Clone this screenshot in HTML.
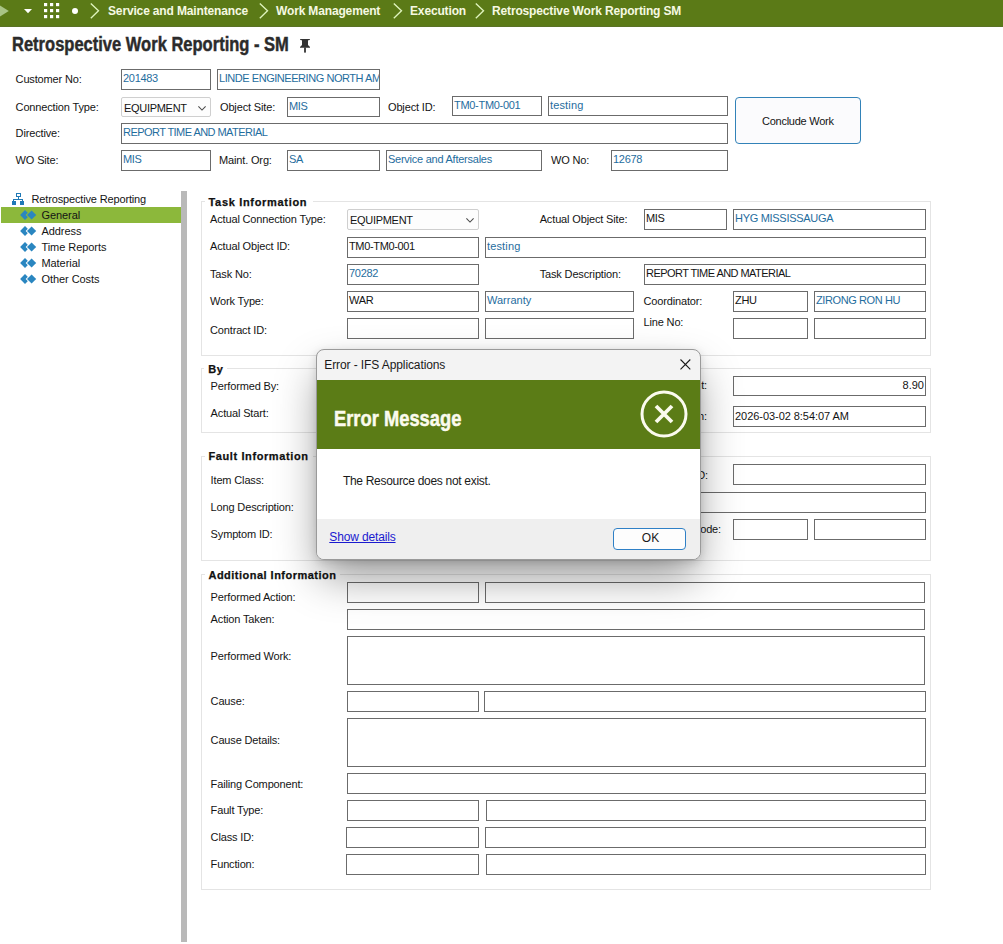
<!DOCTYPE html><html><head><meta charset="utf-8"><style>
html,body{margin:0;padding:0;width:1003px;height:944px;overflow:hidden;background:#fff;position:relative}
body{font-family:"Liberation Sans",sans-serif}
.t{position:absolute;white-space:nowrap;line-height:1.117;font-family:"Liberation Sans",sans-serif}
.f{position:absolute;box-sizing:border-box;border:1px solid #6b6b6b;background:#fff;overflow:hidden}
.sel{position:absolute;box-sizing:border-box;border:1px solid #cfcfcf;border-radius:2px;background:#fdfdfd}
.a{position:absolute}
.g{position:absolute;box-sizing:border-box;border:1px solid #e4e4e4}
.gt{position:absolute;background:#fff}
svg{position:absolute;overflow:visible}
</style></head><body>
<div style="position:absolute;left:0;top:0;width:1003px;height:27px;background:#5b7a17"></div><div style="position:absolute;left:0;top:26px;width:1003px;height:1px;background:#5a7226"></div>
<svg style="left:0;top:0" width="120" height="26"><polygon points="-8,0.6 8.8,11 -8,21.4" fill="#a9c486"/><polygon points="24,9 32,9 28,13.2" fill="#fff"/><rect x="44" y="3" width="3.2" height="3.2" fill="#fff"/><rect x="44" y="9" width="3.2" height="3.2" fill="#fff"/><rect x="44" y="15" width="3.2" height="3.2" fill="#fff"/><rect x="50" y="3" width="3.2" height="3.2" fill="#fff"/><rect x="50" y="9" width="3.2" height="3.2" fill="#fff"/><rect x="50" y="15" width="3.2" height="3.2" fill="#fff"/><rect x="56" y="3" width="3.2" height="3.2" fill="#fff"/><rect x="56" y="9" width="3.2" height="3.2" fill="#fff"/><rect x="56" y="15" width="3.2" height="3.2" fill="#fff"/><circle cx="75" cy="11" r="3" fill="#fff"/></svg>
<svg style="left:90px;top:3px" width="10" height="16"><path d="M0.8 0.5 L8.5 7.8 L0.8 15.2" fill="none" stroke="#dff4bd" stroke-width="1.35"/></svg>
<svg style="left:259px;top:3px" width="10" height="16"><path d="M0.8 0.5 L8.5 7.8 L0.8 15.2" fill="none" stroke="#dff4bd" stroke-width="1.35"/></svg>
<svg style="left:393px;top:3px" width="10" height="16"><path d="M0.8 0.5 L8.5 7.8 L0.8 15.2" fill="none" stroke="#dff4bd" stroke-width="1.35"/></svg>
<svg style="left:475px;top:3px" width="10" height="16"><path d="M0.8 0.5 L8.5 7.8 L0.8 15.2" fill="none" stroke="#dff4bd" stroke-width="1.35"/></svg>
<div class="t" style="left:108px;top:4.94px;font-size:12px;font-weight:700;color:#f6f9e2;letter-spacing:-0.15px;">Service and Maintenance</div>
<div class="t" style="left:276px;top:4.94px;font-size:12px;font-weight:700;color:#f6f9e2;letter-spacing:-0.15px;">Work Management</div>
<div class="t" style="left:410px;top:4.94px;font-size:12px;font-weight:700;color:#f6f9e2;letter-spacing:-0.15px;">Execution</div>
<div class="t" style="left:492px;top:4.94px;font-size:12px;font-weight:700;color:#f6f9e2;letter-spacing:-0.15px;">Retrospective Work Reporting SM</div>
<div class="t" style="left:11.5px;top:34px;font-size:19.5px;font-weight:700;color:#2b2b2b;-webkit-text-stroke:0.45px #2b2b2b;transform:scaleX(0.847);transform-origin:0 0">Retrospective Work Reporting - SM</div>
<svg style="left:300px;top:39px" width="10" height="15" viewBox="0 0 10 15"><path d="M0 0 H10 V0.6 L9 1.2 H8 V6 L10 8 V8.8 H0 V8 L2 6 V1.2 H1 L0 0.6 Z" fill="#333"/><rect x="4.1" y="8.5" width="1.8" height="5.1" fill="#333"/></svg>
<div class="t" style="left:15.6px;top:73.05px;font-size:11px;font-weight:400;color:#141414;letter-spacing:-0.15px;">Customer No:</div>
<div class="f" style="left:121px;top:69px;width:90px;height:21px;background:#fff;border-color:#6b6b6b"><div class="t" style="left:1px;top:1.85px;font-size:11px;color:#1f6d9e;letter-spacing:-0.3px">201483</div></div>
<div class="f" style="left:217px;top:69px;width:163px;height:21px;background:#fff;border-color:#6b6b6b"><div class="t" style="left:1px;top:1.85px;font-size:11px;color:#1f6d9e;letter-spacing:-0.45px">LINDE ENGINEERING NORTH AME</div></div>
<div class="t" style="left:15.6px;top:100.55px;font-size:11px;font-weight:400;color:#141414;letter-spacing:-0.15px;">Connection Type:</div>
<div class="sel" style="left:121px;top:97px;width:90px;height:20px"></div>
<div class="t" style="left:124px;top:102.05px;font-size:11px;font-weight:400;color:#141414;letter-spacing:-0.3px;">EQUIPMENT</div>
<svg class="a" style="left:198px;top:105.6px" width="8" height="5" viewBox="0 0 8 5"><path d="M0.4 0.4 L4 4 L7.6 0.4" fill="none" stroke="#4a4a4a" stroke-width="1.05"/></svg>
<div class="t" style="left:220px;top:100.55px;font-size:11px;font-weight:400;color:#141414;letter-spacing:-0.15px;">Object Site:</div>
<div class="f" style="left:287px;top:97px;width:93px;height:20px;background:#fff;border-color:#6b6b6b"><div class="t" style="left:1px;top:2.04px;font-size:11px;color:#1f6d9e;letter-spacing:-0.3px">MIS</div></div>
<div class="t" style="left:388px;top:100.55px;font-size:11px;font-weight:400;color:#141414;letter-spacing:-0.15px;">Object ID:</div>
<div class="f" style="left:452px;top:96px;width:90px;height:20px;background:#fff;border-color:#6b6b6b"><div class="t" style="left:1px;top:2.04px;font-size:11px;color:#1f6d9e;letter-spacing:-0.3px">TM0-TM0-001</div></div>
<div class="f" style="left:548px;top:96px;width:180px;height:20px;background:#fff;border-color:#6b6b6b"><div class="t" style="left:1px;top:2.04px;font-size:11px;color:#1f6d9e;letter-spacing:0.15px">testing</div></div>
<div class="t" style="left:15.6px;top:127.05px;font-size:11px;font-weight:400;color:#141414;letter-spacing:-0.15px;">Directive:</div>
<div class="f" style="left:121px;top:123px;width:607px;height:21px;background:#fff;border-color:#6b6b6b"><div class="t" style="left:1px;top:2.04px;font-size:11px;color:#1f6d9e;letter-spacing:-0.55px">REPORT TIME AND MATERIAL</div></div>
<div class="t" style="left:15.6px;top:153.74px;font-size:11px;font-weight:400;color:#141414;letter-spacing:-0.15px;">WO Site:</div>
<div class="f" style="left:121px;top:150px;width:90px;height:21px;background:#fff;border-color:#6b6b6b"><div class="t" style="left:1px;top:2.04px;font-size:11px;color:#1f6d9e;letter-spacing:-0.3px">MIS</div></div>
<div class="t" style="left:219px;top:153.74px;font-size:11px;font-weight:400;color:#141414;letter-spacing:-0.15px;">Maint. Org:</div>
<div class="f" style="left:287px;top:150px;width:93px;height:21px;background:#fff;border-color:#6b6b6b"><div class="t" style="left:1px;top:2.04px;font-size:11px;color:#1f6d9e;letter-spacing:-0.3px">SA</div></div>
<div class="f" style="left:386px;top:150px;width:156px;height:21px;background:#fff;border-color:#6b6b6b"><div class="t" style="left:1px;top:1.85px;font-size:11px;color:#1f6d9e;letter-spacing:-0.25px">Service and Aftersales</div></div>
<div class="t" style="left:551px;top:153.74px;font-size:11px;font-weight:400;color:#141414;letter-spacing:-0.15px;">WO No:</div>
<div class="f" style="left:611px;top:150px;width:117px;height:21px;background:#fff;border-color:#6b6b6b"><div class="t" style="left:1px;top:2.04px;font-size:11px;color:#1f6d9e;letter-spacing:-0.3px">12678</div></div>
<div style="position:absolute;left:735px;top:97px;width:126px;height:47px;box-sizing:border-box;border:1px solid #3282b8;border-radius:4px;background:#fbfbfd"></div>
<div class="t" style="left:762px;top:114.75px;font-size:11px;font-weight:400;color:#141414;letter-spacing:-0.25px;">Conclude Work</div>
<svg style="left:12px;top:193px" width="12" height="12" viewBox="0 0 12 12" shape-rendering="crispEdges"><g fill="#2079b6"><rect x="4" y="0" width="5" height="1"/><rect x="4" y="3" width="5" height="1"/><rect x="4" y="0" width="1" height="4"/><rect x="8" y="0" width="1" height="4"/><rect x="6" y="4" width="1" height="2"/><rect x="1" y="6" width="10" height="1"/><rect x="1" y="7" width="1" height="1"/><rect x="10" y="7" width="1" height="1"/><rect x="0" y="8" width="4" height="4"/><rect x="8" y="8" width="4" height="4"/></g></svg>
<div class="t" style="left:31.5px;top:192.84px;font-size:11px;font-weight:400;color:#141414;letter-spacing:-0.15px;">Retrospective Reporting</div>
<div style="position:absolute;left:1px;top:207px;width:180px;height:16px;background:#8cb83b"></div>
<svg style="left:20px;top:210px" width="17" height="10" viewBox="0 0 17 10"><path d="M5 0.1 L9.9 5 L5 9.9 L0.1 5 Z" fill="#2a86c0"/><path d="M11.6 0.4 L16.2 5 L11.6 9.6 L7 5 Z" fill="#2a86c0" stroke="#8cb83b" stroke-width="1.9" paint-order="stroke"/></svg>
<div class="t" style="left:41.4px;top:209.24px;font-size:11px;font-weight:400;color:#141414;letter-spacing:-0.05px;">General</div>
<svg style="left:20px;top:226px" width="17" height="10" viewBox="0 0 17 10"><path d="M5 0.1 L9.9 5 L5 9.9 L0.1 5 Z" fill="#2a86c0"/><path d="M11.6 0.4 L16.2 5 L11.6 9.6 L7 5 Z" fill="#2a86c0" stroke="#fff" stroke-width="1.9" paint-order="stroke"/></svg>
<div class="t" style="left:41.4px;top:225.24px;font-size:11px;font-weight:400;color:#141414;letter-spacing:-0.05px;">Address</div>
<svg style="left:20px;top:242px" width="17" height="10" viewBox="0 0 17 10"><path d="M5 0.1 L9.9 5 L5 9.9 L0.1 5 Z" fill="#2a86c0"/><path d="M11.6 0.4 L16.2 5 L11.6 9.6 L7 5 Z" fill="#2a86c0" stroke="#fff" stroke-width="1.9" paint-order="stroke"/></svg>
<div class="t" style="left:41.4px;top:241.24px;font-size:11px;font-weight:400;color:#141414;letter-spacing:-0.05px;">Time Reports</div>
<svg style="left:20px;top:258px" width="17" height="10" viewBox="0 0 17 10"><path d="M5 0.1 L9.9 5 L5 9.9 L0.1 5 Z" fill="#2a86c0"/><path d="M11.6 0.4 L16.2 5 L11.6 9.6 L7 5 Z" fill="#2a86c0" stroke="#fff" stroke-width="1.9" paint-order="stroke"/></svg>
<div class="t" style="left:41.4px;top:257.25px;font-size:11px;font-weight:400;color:#141414;letter-spacing:-0.05px;">Material</div>
<svg style="left:20px;top:274px" width="17" height="10" viewBox="0 0 17 10"><path d="M5 0.1 L9.9 5 L5 9.9 L0.1 5 Z" fill="#2a86c0"/><path d="M11.6 0.4 L16.2 5 L11.6 9.6 L7 5 Z" fill="#2a86c0" stroke="#fff" stroke-width="1.9" paint-order="stroke"/></svg>
<div class="t" style="left:41.4px;top:273.25px;font-size:11px;font-weight:400;color:#141414;letter-spacing:-0.05px;">Other Costs</div>
<div style="position:absolute;left:181px;top:191px;width:6px;height:751px;background:#b9b9b9"></div>
<div class="g" style="left:201px;top:201px;width:730px;height:155px"></div>
<div class="gt" style="left:204.5px;top:198px;width:108px;height:6px"></div>
<div class="t" style="left:208.5px;top:195.84px;font-size:11px;font-weight:700;color:#111;letter-spacing:0.68px;-webkit-text-stroke:0.25px #111;">Task Information</div>
<div class="t" style="left:210px;top:213.04px;font-size:11px;font-weight:400;color:#141414;letter-spacing:-0.15px;">Actual Connection Type:</div>
<div class="sel" style="left:347px;top:209px;width:132px;height:21px"></div>
<div class="t" style="left:350px;top:214.04px;font-size:11px;font-weight:400;color:#141414;letter-spacing:-0.3px;">EQUIPMENT</div>
<svg class="a" style="left:466px;top:218.1px" width="8" height="5" viewBox="0 0 8 5"><path d="M0.4 0.4 L4 4 L7.6 0.4" fill="none" stroke="#4a4a4a" stroke-width="1.05"/></svg>
<div class="t" style="left:539.7px;top:213.04px;font-size:11px;font-weight:400;color:#141414;letter-spacing:-0.15px;">Actual Object Site:</div>
<div class="f" style="left:644px;top:209px;width:83px;height:21px;background:#fff;border-color:#6b6b6b"><div class="t" style="left:1px;top:1.64px;font-size:11px;color:#141414;letter-spacing:-0.3px">MIS</div></div>
<div class="f" style="left:733px;top:209px;width:193px;height:21px;background:#fff;border-color:#6b6b6b"><div class="t" style="left:1px;top:2.04px;font-size:11px;color:#1f6d9e;letter-spacing:-0.3px">HYG MISSISSAUGA</div></div>
<div class="t" style="left:210px;top:240.04px;font-size:11px;font-weight:400;color:#141414;letter-spacing:-0.15px;">Actual Object ID:</div>
<div class="f" style="left:347px;top:237px;width:132px;height:21px;background:#fff;border-color:#6b6b6b"><div class="t" style="left:1px;top:1.64px;font-size:11px;color:#141414;letter-spacing:-0.35px">TM0-TM0-001</div></div>
<div class="f" style="left:485px;top:237px;width:441px;height:21px;background:#fff;border-color:#6b6b6b"><div class="t" style="left:1px;top:1.64px;font-size:11px;color:#1f6d9e;letter-spacing:0.15px">testing</div></div>
<div class="t" style="left:210px;top:267.55px;font-size:11px;font-weight:400;color:#141414;letter-spacing:-0.15px;">Task No:</div>
<div class="f" style="left:347px;top:264px;width:132px;height:21px;background:#fff;border-color:#6b6b6b"><div class="t" style="left:1px;top:2.04px;font-size:11px;color:#1f6d9e;letter-spacing:-0.3px">70282</div></div>
<div class="t" style="left:539.7px;top:267.55px;font-size:11px;font-weight:400;color:#141414;letter-spacing:-0.15px;">Task Description:</div>
<div class="f" style="left:644px;top:264px;width:282px;height:21px;background:#fff;border-color:#6b6b6b"><div class="t" style="left:1px;top:1.64px;font-size:11px;color:#141414;letter-spacing:-0.55px">REPORT TIME AND MATERIAL</div></div>
<div class="t" style="left:210px;top:294.55px;font-size:11px;font-weight:400;color:#141414;letter-spacing:-0.15px;">Work Type:</div>
<div class="f" style="left:347px;top:291px;width:132px;height:21px;background:#fff;border-color:#6b6b6b"><div class="t" style="left:1px;top:2.04px;font-size:11px;color:#141414;letter-spacing:-0.3px">WAR</div></div>
<div class="f" style="left:485px;top:291px;width:149px;height:21px;background:#fff;border-color:#6b6b6b"><div class="t" style="left:1px;top:2.04px;font-size:11px;color:#1f6d9e;letter-spacing:0px">Warranty</div></div>
<div class="t" style="left:643.5px;top:294.55px;font-size:11px;font-weight:400;color:#141414;letter-spacing:-0.15px;">Coordinator:</div>
<div class="f" style="left:733px;top:291px;width:75px;height:21px;background:#fff;border-color:#6b6b6b"><div class="t" style="left:1px;top:2.04px;font-size:11px;color:#141414;letter-spacing:-0.3px">ZHU</div></div>
<div class="f" style="left:814px;top:291px;width:112px;height:21px;background:#fff;border-color:#6b6b6b"><div class="t" style="left:1px;top:2.04px;font-size:11px;color:#1f6d9e;letter-spacing:-0.4px">ZIRONG RON HU</div></div>
<div class="t" style="left:210px;top:323.55px;font-size:11px;font-weight:400;color:#141414;letter-spacing:-0.15px;">Contract ID:</div>
<div class="f" style="left:347px;top:318px;width:132px;height:21px;background:#fff;border-color:#6b6b6b"></div>
<div class="f" style="left:485px;top:318px;width:149px;height:21px;background:#fff;border-color:#6b6b6b"></div>
<div class="t" style="left:643.5px;top:315.55px;font-size:11px;font-weight:400;color:#141414;letter-spacing:-0.15px;">Line No:</div>
<div class="f" style="left:733px;top:318px;width:75px;height:21px;background:#fff;border-color:#6b6b6b"></div>
<div class="f" style="left:814px;top:318px;width:112px;height:21px;background:#fff;border-color:#6b6b6b"></div>
<div class="g" style="left:201px;top:368px;width:730px;height:64.5px"></div>
<div class="gt" style="left:204.3px;top:365px;width:23px;height:6px"></div>
<div class="t" style="left:208.3px;top:362.85px;font-size:11px;font-weight:700;color:#111;letter-spacing:0.48px;-webkit-text-stroke:0.25px #111;">By</div>
<div class="t" style="left:210.6px;top:379.94px;font-size:11px;font-weight:400;color:#141414;letter-spacing:-0.15px;">Performed By:</div>
<div class="t" style="left:210.6px;top:406.65px;font-size:11px;font-weight:400;color:#141414;letter-spacing:-0.15px;">Actual Start:</div>
<div class="t" style="right:296px;top:379.05px;font-size:11px;font-weight:400;color:#141414;letter-spacing:-0.15px">Actual Amount:</div>
<div class="t" style="right:296px;top:409.55px;font-size:11px;font-weight:400;color:#141414;letter-spacing:-0.15px">Actual Finish:</div>
<div class="f" style="left:733px;top:376px;width:193px;height:20px;background:#fff;border-color:#6b6b6b"><div class="t" style="right:1px;top:2.04px;font-size:11px;color:#141414;letter-spacing:0px">8.90</div></div>
<div class="f" style="left:733px;top:406px;width:193px;height:21px;background:#fff;border-color:#6b6b6b"><div class="t" style="left:1px;top:2.54px;font-size:11px;color:#141414;letter-spacing:-0.05px">2026-03-02 8:54:07 AM</div></div>
<div class="g" style="left:201px;top:456px;width:730px;height:105px"></div>
<div class="gt" style="left:204.5px;top:453px;width:108px;height:6px"></div>
<div class="t" style="left:208.5px;top:449.65px;font-size:11px;font-weight:700;color:#111;letter-spacing:0.6px;-webkit-text-stroke:0.25px #111;">Fault Information</div>
<div class="t" style="left:210.6px;top:473.55px;font-size:11px;font-weight:400;color:#141414;letter-spacing:-0.15px;">Item Class:</div>
<div class="t" style="left:210.6px;top:500.55px;font-size:11px;font-weight:400;color:#141414;letter-spacing:-0.15px;">Long Description:</div>
<div class="t" style="left:210.6px;top:527.54px;font-size:11px;font-weight:400;color:#141414;letter-spacing:-0.15px;">Symptom ID:</div>
<div class="t" style="right:295px;top:468.55px;font-size:11px;font-weight:400;color:#141414;letter-spacing:-0.15px">Error Cause ID:</div>
<div class="t" style="right:282px;top:523.04px;font-size:11px;font-weight:400;color:#141414;letter-spacing:-0.15px">Discovery Code:</div>
<div class="f" style="left:733px;top:464px;width:193px;height:21px;background:#fff;border-color:#6b6b6b"></div>
<div class="f" style="left:347px;top:492px;width:579px;height:21px;background:#fff;border-color:#6b6b6b"></div>
<div class="f" style="left:733px;top:519px;width:75px;height:21px;background:#fff;border-color:#6b6b6b"></div>
<div class="f" style="left:814px;top:519px;width:112px;height:21px;background:#fff;border-color:#6b6b6b"></div>
<div class="g" style="left:201px;top:574px;width:730px;height:316px"></div>
<div class="gt" style="left:204.5px;top:571px;width:135px;height:6px"></div>
<div class="t" style="left:208.5px;top:568.84px;font-size:11px;font-weight:700;color:#111;letter-spacing:0.48px;-webkit-text-stroke:0.25px #111;">Additional Information</div>
<div class="t" style="left:210.6px;top:590.84px;font-size:11px;font-weight:400;color:#141414;letter-spacing:-0.15px;">Performed Action:</div>
<div class="f" style="left:347px;top:582px;width:132px;height:21px;background:#fff;border-color:#6b6b6b"></div>
<div class="f" style="left:485px;top:582px;width:440px;height:21px;background:#fff;border-color:#6b6b6b"></div>
<div class="t" style="left:210.6px;top:613.25px;font-size:11px;font-weight:400;color:#141414;letter-spacing:-0.15px;">Action Taken:</div>
<div class="f" style="left:347px;top:609px;width:578px;height:21px;background:#fff;border-color:#6b6b6b"></div>
<div class="t" style="left:210.6px;top:650.34px;font-size:11px;font-weight:400;color:#141414;letter-spacing:-0.15px;">Performed Work:</div>
<div class="f" style="left:347px;top:636px;width:578px;height:49px;background:#fff;border-color:#6b6b6b"></div>
<div class="t" style="left:210.6px;top:694.64px;font-size:11px;font-weight:400;color:#141414;letter-spacing:-0.15px;">Cause:</div>
<div class="f" style="left:347px;top:691px;width:132px;height:21px;background:#fff;border-color:#6b6b6b"></div>
<div class="f" style="left:484px;top:691px;width:442px;height:21px;background:#fff;border-color:#6b6b6b"></div>
<div class="t" style="left:210.6px;top:733.75px;font-size:11px;font-weight:400;color:#141414;letter-spacing:-0.15px;">Cause Details:</div>
<div class="f" style="left:347px;top:718px;width:579px;height:49px;background:#fff;border-color:#6b6b6b"></div>
<div class="t" style="left:210.6px;top:777.54px;font-size:11px;font-weight:400;color:#141414;letter-spacing:-0.15px;">Failing Component:</div>
<div class="f" style="left:347px;top:773px;width:579px;height:21px;background:#fff;border-color:#6b6b6b"></div>
<div class="t" style="left:210.6px;top:804.04px;font-size:11px;font-weight:400;color:#141414;letter-spacing:-0.15px;">Fault Type:</div>
<div class="f" style="left:347px;top:800px;width:132px;height:21px;background:#fff;border-color:#6b6b6b"></div>
<div class="f" style="left:486px;top:800px;width:440px;height:21px;background:#fff;border-color:#6b6b6b"></div>
<div class="t" style="left:210.6px;top:831.44px;font-size:11px;font-weight:400;color:#141414;letter-spacing:-0.15px;">Class ID:</div>
<div class="f" style="left:346px;top:827px;width:133px;height:21px;background:#fff;border-color:#6b6b6b"></div>
<div class="f" style="left:485px;top:827px;width:441px;height:21px;background:#fff;border-color:#6b6b6b"></div>
<div class="t" style="left:210.6px;top:858.04px;font-size:11px;font-weight:400;color:#141414;letter-spacing:-0.15px;">Function:</div>
<div class="f" style="left:346px;top:854px;width:133px;height:21px;background:#fff;border-color:#6b6b6b"></div>
<div class="f" style="left:486px;top:854px;width:440px;height:21px;background:#fff;border-color:#6b6b6b"></div>
<div style="position:absolute;left:316px;top:349px;width:385px;height:211px;border-radius:8px;box-shadow:0 20px 44px -4px rgba(0,0,0,0.42),0 2px 9px rgba(0,0,0,0.13);overflow:hidden;background:#f3f3f3;border:1px solid #9a9a9a;box-sizing:border-box"><div style="position:absolute;left:0;top:30px;width:384px;height:69px;background:#5b7c16"></div><div style="position:absolute;left:0;top:99px;width:384px;height:70px;background:#fff"></div><div style="position:absolute;left:0;top:169px;width:384px;height:50px;background:#efefef"></div></div>
<div class="t" style="left:324.3px;top:359.34px;font-size:12px;font-weight:400;color:#1a1a1a;letter-spacing:-0.1px;">Error - IFS Applications</div>
<svg style="left:680px;top:359px" width="11" height="11" viewBox="0 0 11 11"><path d="M0.5 0.5 L10.3 10.3 M10.3 0.5 L0.5 10.3" stroke="#1a1a1a" stroke-width="1.1"/></svg>
<div class="t" style="left:333.5px;top:406.4px;font-size:22.5px;font-weight:700;color:#fbfbee;-webkit-text-stroke:0.5px #fbfbee;transform:scaleX(0.815);transform-origin:0 0">Error Message</div>
<svg style="left:640px;top:390px" width="48" height="48" viewBox="0 0 48 48"><circle cx="24" cy="24" r="22" fill="none" stroke="#fbfbee" stroke-width="3"/><path d="M16 16 L32 32 M32 16 L16 32" stroke="#fbfbee" stroke-width="3.8"/></svg>
<div class="t" style="left:342.9px;top:474.64px;font-size:12px;font-weight:400;color:#1a1a1a;letter-spacing:-0.3px;">The Resource does not exist.</div>
<div class="t" style="left:329.3px;top:530.5px;font-size:12px;color:#1a1acf;letter-spacing:-0.15px;text-decoration:underline">Show details</div>
<div style="position:absolute;left:613px;top:528px;width:73px;height:22px;box-sizing:border-box;border:1.6px solid #2f80c6;border-radius:4px;background:#fdfdfd"></div>
<div class="t" style="left:641.8px;top:531.94px;font-size:12px;font-weight:400;color:#1a1a1a;letter-spacing:0px;">OK</div>
</body></html>
